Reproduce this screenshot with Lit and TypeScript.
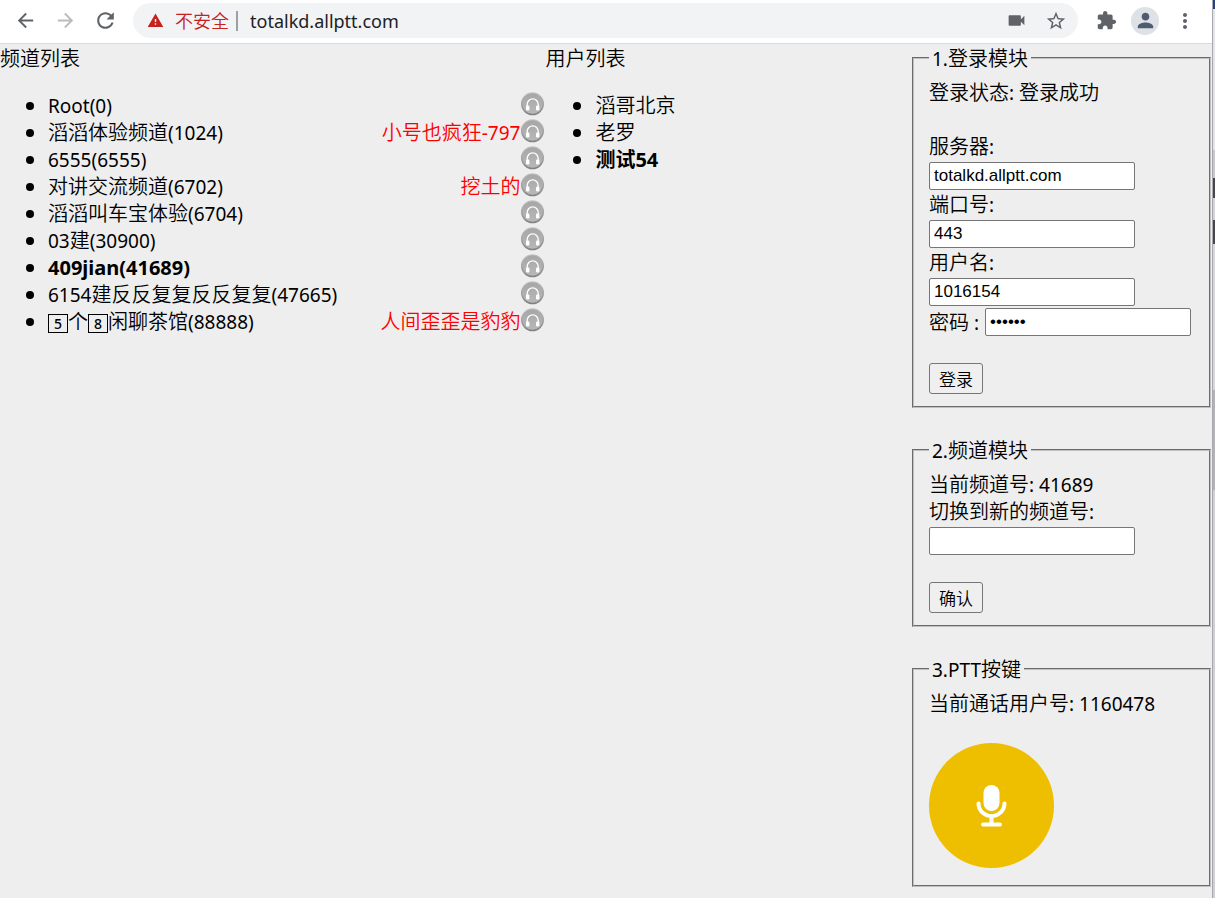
import { LitElement, html, css, svg } from "lit";
import { customElement } from "lit/decorators.js";

interface Channel {
  name: unknown;
  id: string;
  speaker?: unknown;
  current?: boolean;
}

const latin = (text: string) => html`<span class="latin">${text}</span>`;
const keycap = (digit: string) => html`<span class="keycap">${digit}</span>`;

const channels: Channel[] = [
  { name: latin("Root"), id: "0" },
  { name: "滔滔体验频道", id: "1024", speaker: html`小号也疯狂${latin("-797")}` },
  { name: latin("6555"), id: "6555" },
  { name: "对讲交流频道", id: "6702", speaker: "挖土的" },
  { name: "滔滔叫车宝体验", id: "6704" },
  { name: html`${latin("03")}建`, id: "30900" },
  { name: latin("409jian"), id: "41689", current: true },
  { name: html`${latin("6154")}建反反复复反反复复`, id: "47665" },
  { name: html`${keycap("5")}个${keycap("8")}闲聊茶馆`, id: "88888", speaker: "人间歪歪是豹豹" },
];

const glyph = (d: string, size = 24) =>
  html`<svg class="glyph" width=${size} height=${size} viewBox="0 0 24 24" aria-hidden="true">${svg`<path d=${d}></path>`}</svg>`;

const icons = {
  back: "M20 11H7.83l5.59-5.59L12 4l-8 8 8 8 1.41-1.41L7.83 13H20v-2z",
  forward: "M12 4l-1.41 1.41L16.17 11H4v2h12.17l-5.58 5.59L12 20l8-8z",
  reload:
    "M17.65 6.35C16.2 4.9 14.21 4 12 4c-4.42 0-7.99 3.58-7.99 8s3.57 8 7.99 8c3.73 0 6.84-2.55 7.73-6h-2.08c-.82 2.33-3.04 4-5.65 4-3.31 0-6-2.69-6-6s2.69-6 6-6c1.66 0 3.14.69 4.22 1.78L13 11h7V4l-2.35 2.35z",
  warning: "M1 21h22L12 2 1 21zm12-3h-2v-2h2v2zm0-4h-2v-4h2v4z",
  camera:
    "M17 10.500V7c0-.55-.45-1-1-1H4c-.55 0-1 .45-1 1v10c0 .55.45 1 1 1h12c.55 0 1-.45 1-1v-3.500l4 4v-11l-4 4z",
  star: "M22 9.240l-7.190-.62L12 2 9.190 8.630 2 9.240l5.460 4.730L5.820 21 12 17.270 18.180 21l-1.630-7.030L22 9.240zM12 15.400l-3.760 2.270 1-4.280-3.320-2.880 4.380-.38L12 6.100l1.710 4.040 4.380.38-3.320 2.880 1 4.280L12 15.400z",
  puzzle:
    "M20.500 11H19V7c0-1.100-.9-2-2-2h-4V3.500C13 2.120 11.880 1 10.500 1S8 2.120 8 3.500V5H4c-1.100 0-1.990.9-1.990 2v3.800H3.500c1.490 0 2.700 1.210 2.700 2.700s-1.210 2.700-2.700 2.700H2V20c0 1.100.9 2 2 2h3.800v-1.500c0-1.490 1.210-2.700 2.700-2.700 1.490 0 2.700 1.210 2.700 2.700V22H17c1.100 0 2-.9 2-2v-4h1.500c1.380 0 2.500-1.120 2.500-2.500S21.880 11 20.500 11z",
  person:
    "M12 12c2.210 0 4-1.790 4-4s-1.790-4-4-4-4 1.790-4 4 1.790 4 4 4zm0 2c-2.670 0-8 1.340-8 4v2h16v-2c0-2.660-5.330-4-8-4z",
  more: "M12 8c1.100 0 2-.9 2-2s-.9-2-2-2-2 .9-2 2 .9 2 2 2zm0 2c-1.100 0-2 .9-2 2s.9 2 2 2 2-.9 2-2-.9-2-2-2zm0 6c-1.100 0-2 .9-2 2s.9 2 2 2 2-.9 2-2-.9-2-2-2z",
};

@customElement("browser-bar")
class BrowserBar extends LitElement {
  static styles = css`
    :host {
      display: flex;
      align-items: center;
      height: 43px;
      box-sizing: border-box;
      padding: 0 15px 2px 10px;
      background: #fff;
      color: #5f6368;
      font: 18px/28px "Noto Sans", "Noto Sans CJK SC", sans-serif;
    }
    button {
      display: grid;
      place-items: center;
      padding: 0;
      border: 0;
      background: none;
      color: inherit;
    }
    .glyph {
      display: block;
      fill: currentColor;
    }
    .nav {
      display: flex;
      gap: 10px;
      margin-right: 13px;
    }
    .nav button {
      width: 30px;
      height: 30px;
    }
    .nav button:disabled {
      color: #babcbe;
    }
    .omnibox {
      display: flex;
      flex: 1;
      align-items: center;
      height: 35px;
      box-sizing: border-box;
      padding: 0 11px 0 14px;
      border-radius: 18px;
      background: #f1f3f4;
    }
    .warning {
      display: flex;
      align-items: center;
      gap: 11px;
      color: #c5221f;
      font-size: 18px;
      font-weight: 350;
    }
    .divider {
      width: 2px;
      height: 20px;
      margin: 0 12px 0 7px;
      background: #9aa0a6;
    }
    .url {
      flex: 1;
      min-width: 0;
      padding: 0;
      border: 0;
      outline: 0;
      background: none;
      color: #202124;
      font: inherit;
    }
    .tools {
      display: flex;
      gap: 18px;
    }
    .actions {
      display: flex;
      align-items: center;
      gap: 14px;
      margin-left: 18px;
    }
    .avatar {
      width: 28px;
      height: 28px;
      border-radius: 50%;
      background: #dee1e6;
      color: #4f5b70;
    }
  `;

  render() {
    return html`
      <div class="nav">
        <button aria-label="返回">${glyph(icons.back, 23)}</button>
        <button aria-label="前进" disabled>${glyph(icons.forward, 23)}</button>
        <button aria-label="重新加载">${glyph(icons.reload, 25)}</button>
      </div>
      <div class="omnibox">
        <span class="warning">${glyph(icons.warning, 17)}不安全</span>
        <span class="divider"></span>
        <input class="url" aria-label="地址" value="totalkd.allptt.com" />
        <div class="tools">
          <button aria-label="摄像头">${glyph(icons.camera, 21)}</button>
          <button aria-label="收藏">${glyph(icons.star, 22)}</button>
        </div>
      </div>
      <div class="actions">
        <button aria-label="扩展程序">${glyph(icons.puzzle, 21)}</button>
        <button class="avatar" aria-label="用户">${glyph(icons.person, 23)}</button>
        <button aria-label="更多">${glyph(icons.more, 24)}</button>
      </div>
    `;
  }
}

@customElement("app-root")
class AppRoot extends LitElement {
  static styles = css`
    :host {
      display: flex;
      min-height: 100vh;
      overflow: hidden;
      color: #000;
      font: 350 20px/27px "Noto Sans CJK SC", sans-serif;
    }
    .window {
      display: flex;
      flex: 1;
      flex-direction: column;
      min-width: 0;
      background: #eee;
    }
    .page {
      display: grid;
      grid-template-columns: 45% 1fr 300px;
      flex: 1;
      border-top: 1px solid #d9dadb;
    }
    .behind {
      width: 3px;
      border-left: 1px solid #a8a8ac;
      box-sizing: border-box;
      background: linear-gradient(#27437f 9px, #e4e4e8 9px 150px, #c8c8cc 150px 178px, #45464f 178px 198px, #d4d4d8 198px 220px, #45464f 220px 244px, #d8d8dc 244px 390px, #b4b4b8 390px 490px, #d0d0d4 490px);
    }
    .latin {
      font-family: "Noto Sans", sans-serif;
      font-size: 19px;
      font-weight: 400;
      line-height: 1;
    }
    ul {
      margin: 20px 0;
      padding-left: 48px;
    }
    .users ul {
      padding-left: 50px;
    }
    .row {
      display: flex;
      justify-content: space-between;
      height: 27px;
    }
    .current {
      font-weight: 700;
    }
    .current .latin {
      font-size: 20px;
      font-weight: 700;
    }
    .speaker {
      display: flex;
      color: #f00;
    }
    .keycap {
      display: inline-block;
      width: 20px;
      height: 19px;
      box-sizing: border-box;
      border: 1px solid #000;
      font: 500 14px/17px "Noto Sans", sans-serif;
      text-align: center;
      vertical-align: 0;
    }
    .headset {
      display: block;
      width: 25px;
      height: 25px;
    }
    .modules {
      display: flex;
      flex-direction: column;
      gap: 28px;
      padding: 0 1px 11px 0;
    }
    fieldset {
      min-width: 0;
      margin: 0;
      padding: 7px 15px 12px;
      border: 2px groove #c0c0c0;
    }
    legend {
      padding: 0 3px;
    }
    p {
      margin: 0;
    }
    .spaced {
      margin-bottom: 27px;
    }
    label {
      display: block;
    }
    .field {
      display: block;
      width: 206px;
      height: 28px;
      box-sizing: border-box;
      margin: 3px 0 0;
      padding: 1px 4px;
      border: 1px solid #767676;
      border-radius: 2px;
      background: #fff;
      color: #000;
      font: 17px "Liberation Sans", sans-serif;
    }
    .inline {
      display: flex;
      gap: 6px;
      white-space: nowrap;
    }
    .inline .field {
      margin-top: 0;
    }
    .submit {
      display: block;
      width: 54px;
      height: 31px;
      margin-top: 27px;
      padding: 0;
      border: 1px solid #767676;
      border-radius: 3px;
      background: #efefef;
      color: #000;
      font: 350 17px/27px "Noto Sans CJK SC", sans-serif;
    }
    .inline {
      padding-top: 2px;
    }
    .talk {
      display: block;
      width: 125px;
      height: 125px;
      margin: 0 0 5px;
      padding: 0;
      border: 0;
      border-radius: 50%;
      background: #edbf00;
    }
    .mic {
      display: block;
    }
  `;

  private headset() {
    return html`<svg class="headset" viewBox="0 0 25 25" aria-hidden="true">
      <defs>
        <linearGradient id="rim" x1="0" y1="0" x2="0" y2="1">
          <stop offset="0" stop-color="#c4c4c4"></stop>
          <stop offset="1" stop-color="#808080"></stop>
        </linearGradient>
        <linearGradient id="face" x1="0" y1="0" x2="0" y2="1">
          <stop offset="0" stop-color="#a6a6a6"></stop>
          <stop offset="1" stop-color="#b8b8b8"></stop>
        </linearGradient>
      </defs>
      <circle cx="12.500" cy="12.800" r="11.500" fill="url(#rim)"></circle>
      <circle cx="12.500" cy="12.500" r="10.300" fill="url(#face)"></circle>
      <path d="M7.200 16V13.500a5.500 5.700 0 0 1 11 0V16" fill="none" stroke="#fff" stroke-width="1.300"></path>
      <rect x="6" y="14.500" width="3.400" height="5" rx="1.200" fill="#fff"></rect>
      <rect x="16" y="14.500" width="3.400" height="5" rx="1.200" fill="#fff"></rect>
    </svg>`;
  }

  render() {
    return html`
      <div class="window">
        <browser-bar></browser-bar>
        <main class="page">
          <section>
            <p>频道列表</p>
            <ul>
              ${channels.map(
                (c) => html`<li class=${c.current ? "current" : ""}>
                  <div class="row">
                    <span>${c.name}${latin(`(${c.id})`)}</span>
                    <span class="speaker">${c.speaker ? html`<span>${c.speaker}</span>` : ""}${this.headset()}</span>
                  </div>
                </li>`
              )}
            </ul>
          </section>
          <section class="users">
            <p>用户列表</p>
            <ul>
              <li>滔哥北京</li>
              <li>老罗</li>
              <li class="current">测试${latin("54")}</li>
            </ul>
          </section>
          <div class="modules">
            <fieldset>
              <legend>${latin("1.")}登录模块</legend>
              <p class="spaced">登录状态${latin(": ")}登录成功</p>
              <label for="server">服务器${latin(":")}</label>
              <input class="field" id="server" value="totalkd.allptt.com" />
              <label for="port">端口号${latin(":")}</label>
              <input class="field" id="port" value="443" />
              <label for="user">用户名${latin(":")}</label>
              <input class="field" id="user" value="1016154" />
              <div class="inline">
                <label for="password">密码${latin(" :")}</label>
                <input class="field" id="password" type="password" value="101615" />
              </div>
              <button class="submit">登录</button>
            </fieldset>
            <fieldset>
              <legend>${latin("2.")}频道模块</legend>
              <p>当前频道号${latin(": 41689")}</p>
              <label for="channel">切换到新的频道号${latin(":")}</label>
              <input class="field" id="channel" />
              <button class="submit">确认</button>
            </fieldset>
            <fieldset>
              <legend>${latin("3.PTT")}按键</legend>
              <p class="spaced">当前通话用户号${latin(": 1160478")}</p>
              <button class="talk" aria-label="按住说话">
                <svg class="mic" width="125" height="125" viewBox="0 0 125 125" aria-hidden="true">
                  <rect x="54.500" y="42" width="16" height="26" rx="8" fill="#fff"></rect>
                  <path d="M49.500 60.500a13 12.500 0 0 0 26 0M62.500 73v8M54 81.500h17" fill="none" stroke="#fff" stroke-width="4" stroke-linecap="round"></path>
                </svg>
              </button>
            </fieldset>
          </div>
        </main>
      </div>
      <div class="behind" aria-hidden="true"></div>
    `;
  }
}
